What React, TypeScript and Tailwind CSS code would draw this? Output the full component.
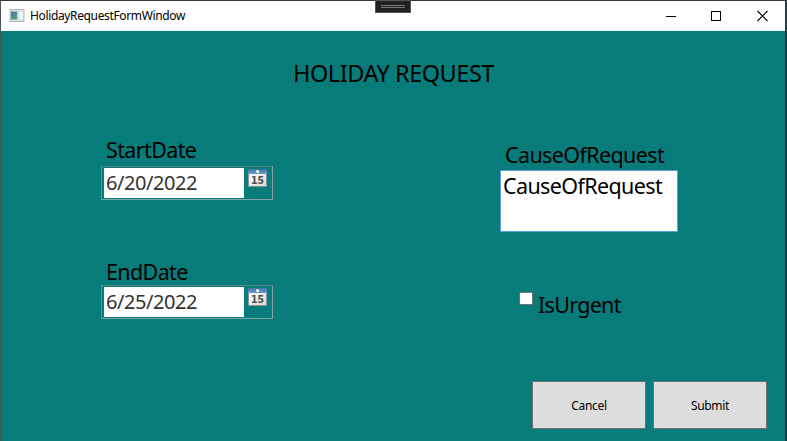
import React from 'react';

function AppIcon() {
  return (
    <svg width="16" height="14" viewBox="0 0 16 14" className="shrink-0">
      <defs>
        <linearGradient id="pane" x1="0" y1="0" x2="1" y2="1">
          <stop offset="0" stopColor="#3f78a8" />
          <stop offset="1" stopColor="#58a878" />
        </linearGradient>
      </defs>
      <rect x="1" y="0.5" width="14" height="12" fill="#dfe3e7" stroke="#b3b7bc" />
      <rect x="2" y="2.5" width="6" height="8" fill="url(#pane)" />
      <rect x="8" y="2.5" width="2" height="8" fill="#c5dce4" />
      <rect x="10.5" y="3" width="3" height="7.5" fill="#f8f9fa" />
    </svg>
  );
}

function CalendarIcon() {
  return (
    <svg width="20" height="19" viewBox="0 0 20 19" className="ml-[4px] mt-px shrink-0">
      <defs>
        <linearGradient id="calTop" x1="0" y1="0" x2="0" y2="1">
          <stop offset="0" stopColor="#3f75a4" />
          <stop offset="1" stopColor="#6a9fca" />
        </linearGradient>
        <linearGradient id="calPage" x1="0" y1="0" x2="1" y2="1">
          <stop offset="0" stopColor="#ffffff" />
          <stop offset="1" stopColor="#d4d6d8" />
        </linearGradient>
      </defs>
      <rect x="0.5" y="4.5" width="18" height="13" fill="url(#calPage)" stroke="#8b9294" />
      <rect x="0" y="0" width="19" height="5" fill="url(#calTop)" />
      <circle cx="9.6" cy="2.5" r="1.5" fill="#ffffff" />
      <text x="3" y="15" fontFamily="DejaVu Sans, sans-serif" fontWeight="700" fontSize="10" textLength="13" lengthAdjust="spacingAndGlyphs" fill="#4a4e52">
        15
      </text>
    </svg>
  );
}

function DateField({ label, value, className }: { label: string; value: string; className: string }) {
  return (
    <div>
      <div className={`pl-[5px] text-[21.5px] tracking-[-0.62px] ${className}`}>{label}</div>
      <div className="flex h-[34px] w-[172px] border border-t-[#5b8583] border-r-[#84a5aa] border-b-[#84a5aa] border-l-[#70898c] pt-px pl-[2px]">
        <div className="h-[30px] w-[140px] bg-white pl-[2px] text-[20px] leading-[30px] tracking-[-0.45px] text-[#333333]">{value}</div>
        <CalendarIcon />
      </div>
    </div>
  );
}

export default function App() {
  return (
    <div className="flex h-[441px] w-[787px] overflow-hidden bg-[#263b3d] font-['Noto_Sans','Open_Sans',sans-serif] whitespace-nowrap text-black">
      <div className="relative flex w-[785px] flex-col border-t border-l border-t-[#33383b] border-l-[#4b5557] bg-[#087c7a]">
        <header className="flex h-[30px] shrink-0 items-center bg-white pl-2">
          <AppIcon />
          <span className="ml-[5px] text-[12px] leading-[16px] tracking-[-0.36px]">HolidayRequestFormWindow</span>
          <svg width="102" height="12" viewBox="0 0 102 12" className="mr-[17px] ml-auto" fill="none" stroke="#000">
            <path d="M0 6.5H10" />
            <rect x="45.5" y="1.5" width="9" height="9" />
            <path d="M91.5 1L101.5 11M101.5 1L91.5 11" strokeWidth="1.1" />
          </svg>
        </header>
        <div className="absolute -top-px left-[374px] flex h-[13px] w-[36px] flex-col items-center justify-center gap-px border border-[#555756] bg-[#202120]">
          <i className="block h-px w-6 bg-[#777]" />
          <i className="block h-px w-6 bg-[#777]" />
        </div>
        <main className="flex flex-1 flex-col">
          <h1 className="mt-[26px] pl-[292px] text-[23.5px] leading-[32px] tracking-[-0.47px]">HOLIDAY REQUEST</h1>
          <div className="flex">
            <section className="w-[499px] pl-[100px]">
              <DateField className="mt-[45px] leading-[32px]" label="StartDate" value="6/20/2022" />
              <DateField className="mt-[59px] leading-[26px]" label="EndDate" value="6/25/2022" />
            </section>
            <section className="h-[292px] pt-[51px]">
              <div className="h-[30px] pl-[5px] text-[21.5px] leading-[30px] tracking-[-0.62px]">CauseOfRequest</div>
              <div className="h-[62px] w-[178px] border border-[#569de5] bg-white pl-[2px] text-[21.5px] leading-[30px] tracking-[-0.62px]">CauseOfRequest</div>
              <div className="mt-[58px] flex pl-[19px]">
                <div className="mt-[2px] h-[13px] w-[14px] border border-[#707070] bg-white" />
                <span className="ml-[5px] text-[21.5px] leading-[30px] tracking-[-0.7px]">IsUrgent</span>
              </div>
              <div className="mt-[61px] flex gap-[7px] pl-8">
                <button className="h-[48px] w-[114px] border border-[#707070] bg-[#dddddd] pt-0.5 text-[12px] tracking-[-0.3px]">Cancel</button>
                <button className="h-[48px] w-[114px] border border-[#707070] bg-[#dddddd] pt-0.5 text-[12px] tracking-[-0.3px]">Submit</button>
              </div>
            </section>
          </div>
        </main>
      </div>
    </div>
  );
}
